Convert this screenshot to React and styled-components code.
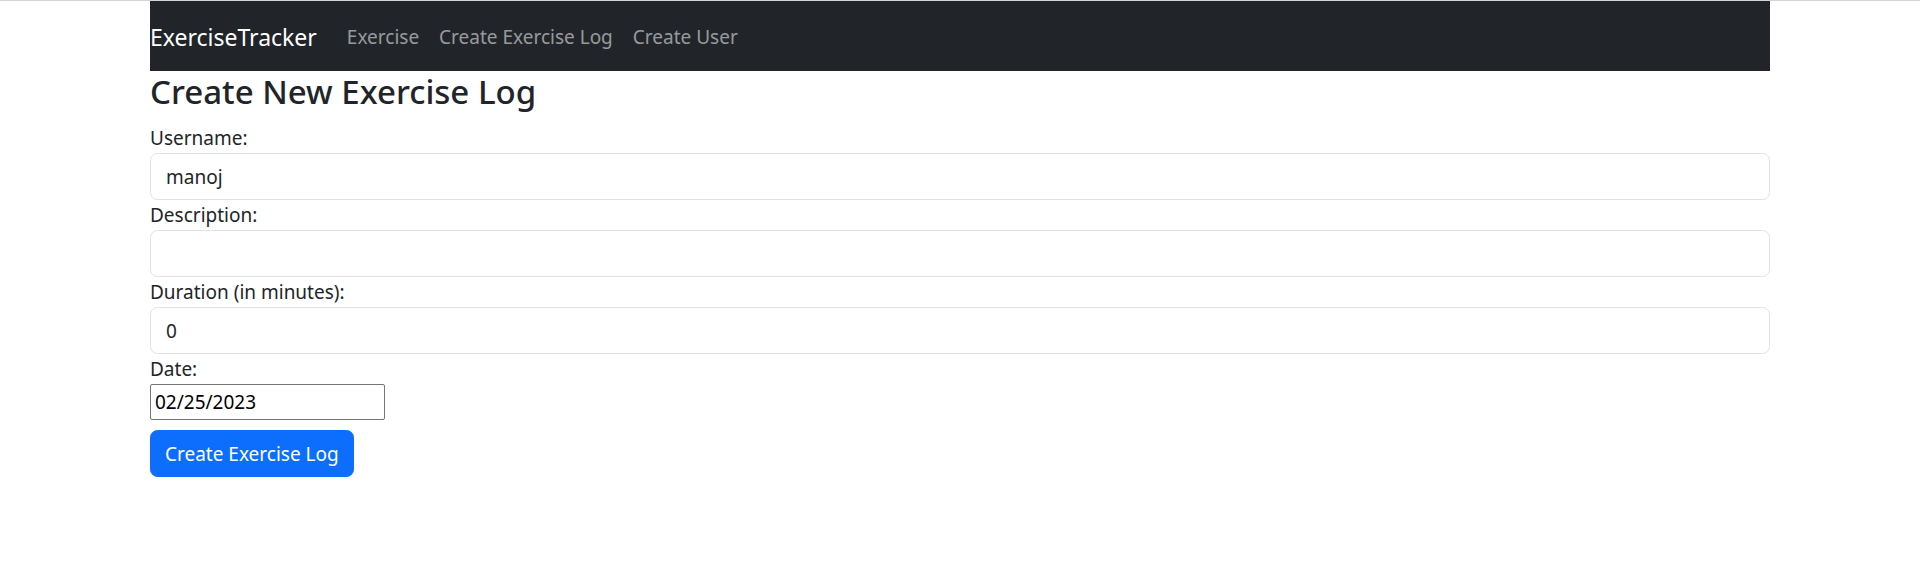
import React from 'react';
import styled, { createGlobalStyle } from 'styled-components';

const GlobalStyle = createGlobalStyle`
  html, body {
    margin: 0;
    padding: 0;
    background: #fff;
  }

  body {
    border-top: 1px solid #d4d4d4;
    font-family: 'Noto Sans', 'Open Sans', sans-serif;
    font-size: 20px;
    line-height: 1.5;
    color: #212529;
  }

  *, *::before, *::after {
    box-sizing: border-box;
  }
`;

const Container = styled.div`
  width: 1620px;
  margin: 0 auto 0 150px;
`;

const Navbar = styled.nav`
  display: flex;
  align-items: center;
  height: 70px;
  padding: 10px 0;
  background-color: #212529;
`;

const Brand = styled.a`
  padding: 7px 0 5px;
  margin-right: 20px;
  font-size: 23px;
  line-height: 38px;
  color: #fff;
  text-decoration: none;
  white-space: nowrap;
`;

const NavList = styled.ul`
  display: flex;
  margin: 0;
  padding: 0;
  list-style: none;
`;

const NavLink = styled.a`
  display: block;
  padding: 11px 10px 9px;
  font-size: 19px;
  color: rgba(255, 255, 255, 0.55);
  text-decoration: none;
`;

const Title = styled.h3`
  margin: 0 0 10px;
  font-size: 33px;
  font-weight: 500;
  line-height: 42px;
`;

const Field = styled.div`
  display: flex;
  flex-direction: column;
  align-items: flex-start;
`;

const Label = styled.label`
  font-size: 19px;
  line-height: 30px;
`;

const TextInput = styled.input`
  display: block;
  width: 100%;
  height: 47px;
  padding: 7.5px 15px;
  font-family: inherit;
  font-size: 19px;
  line-height: 30px;
  color: #212529;
  background: #fff;
  border: 1.25px solid #dee2e6;
  border-radius: 7.5px;
  outline: none;
`;

const DateInput = styled.input`
  width: 235px;
  height: 36px;
  padding: 1px 4px;
  font-family: inherit;
  font-size: 19px;
  color: #000;
  background: #fff;
  border: 1px solid #767676;
  border-radius: 2px;
  outline: none;
`;

const SubmitRow = styled.div`
  margin-top: 10px;
`;

const Button = styled.button`
  height: 47px;
  padding: 7.5px 14px;
  font-family: inherit;
  font-size: 19px;
  line-height: 30px;
  color: #fff;
  background-color: #0d6efd;
  border: 1.25px solid #0d6efd;
  border-radius: 7.5px;
  cursor: pointer;
`;

const links = ['Exercise', 'Create Exercise Log', 'Create User'];

const App = () => (
  <>
    <GlobalStyle />
    <Container>
      <Navbar>
        <Brand href="#">ExerciseTracker</Brand>
        <NavList>
          {links.map(link => (
            <li key={link}>
              <NavLink href="#">{link}</NavLink>
            </li>
          ))}
        </NavList>
      </Navbar>

      <Title>Create New Exercise Log</Title>
      <form onSubmit={e => e.preventDefault()}>
        <Field>
          <Label>Username:</Label>
          <TextInput type="text" defaultValue="manoj" />
        </Field>
        <Field>
          <Label>Description:</Label>
          <TextInput type="text" defaultValue="" />
        </Field>
        <Field>
          <Label>Duration (in minutes):</Label>
          <TextInput type="text" defaultValue="0" />
        </Field>
        <Field>
          <Label>Date:</Label>
          <DateInput type="text" defaultValue="02/25/2023" />
        </Field>
        <SubmitRow>
          <Button type="submit">Create Exercise Log</Button>
        </SubmitRow>
      </form>
    </Container>
  </>
);

export default App;
